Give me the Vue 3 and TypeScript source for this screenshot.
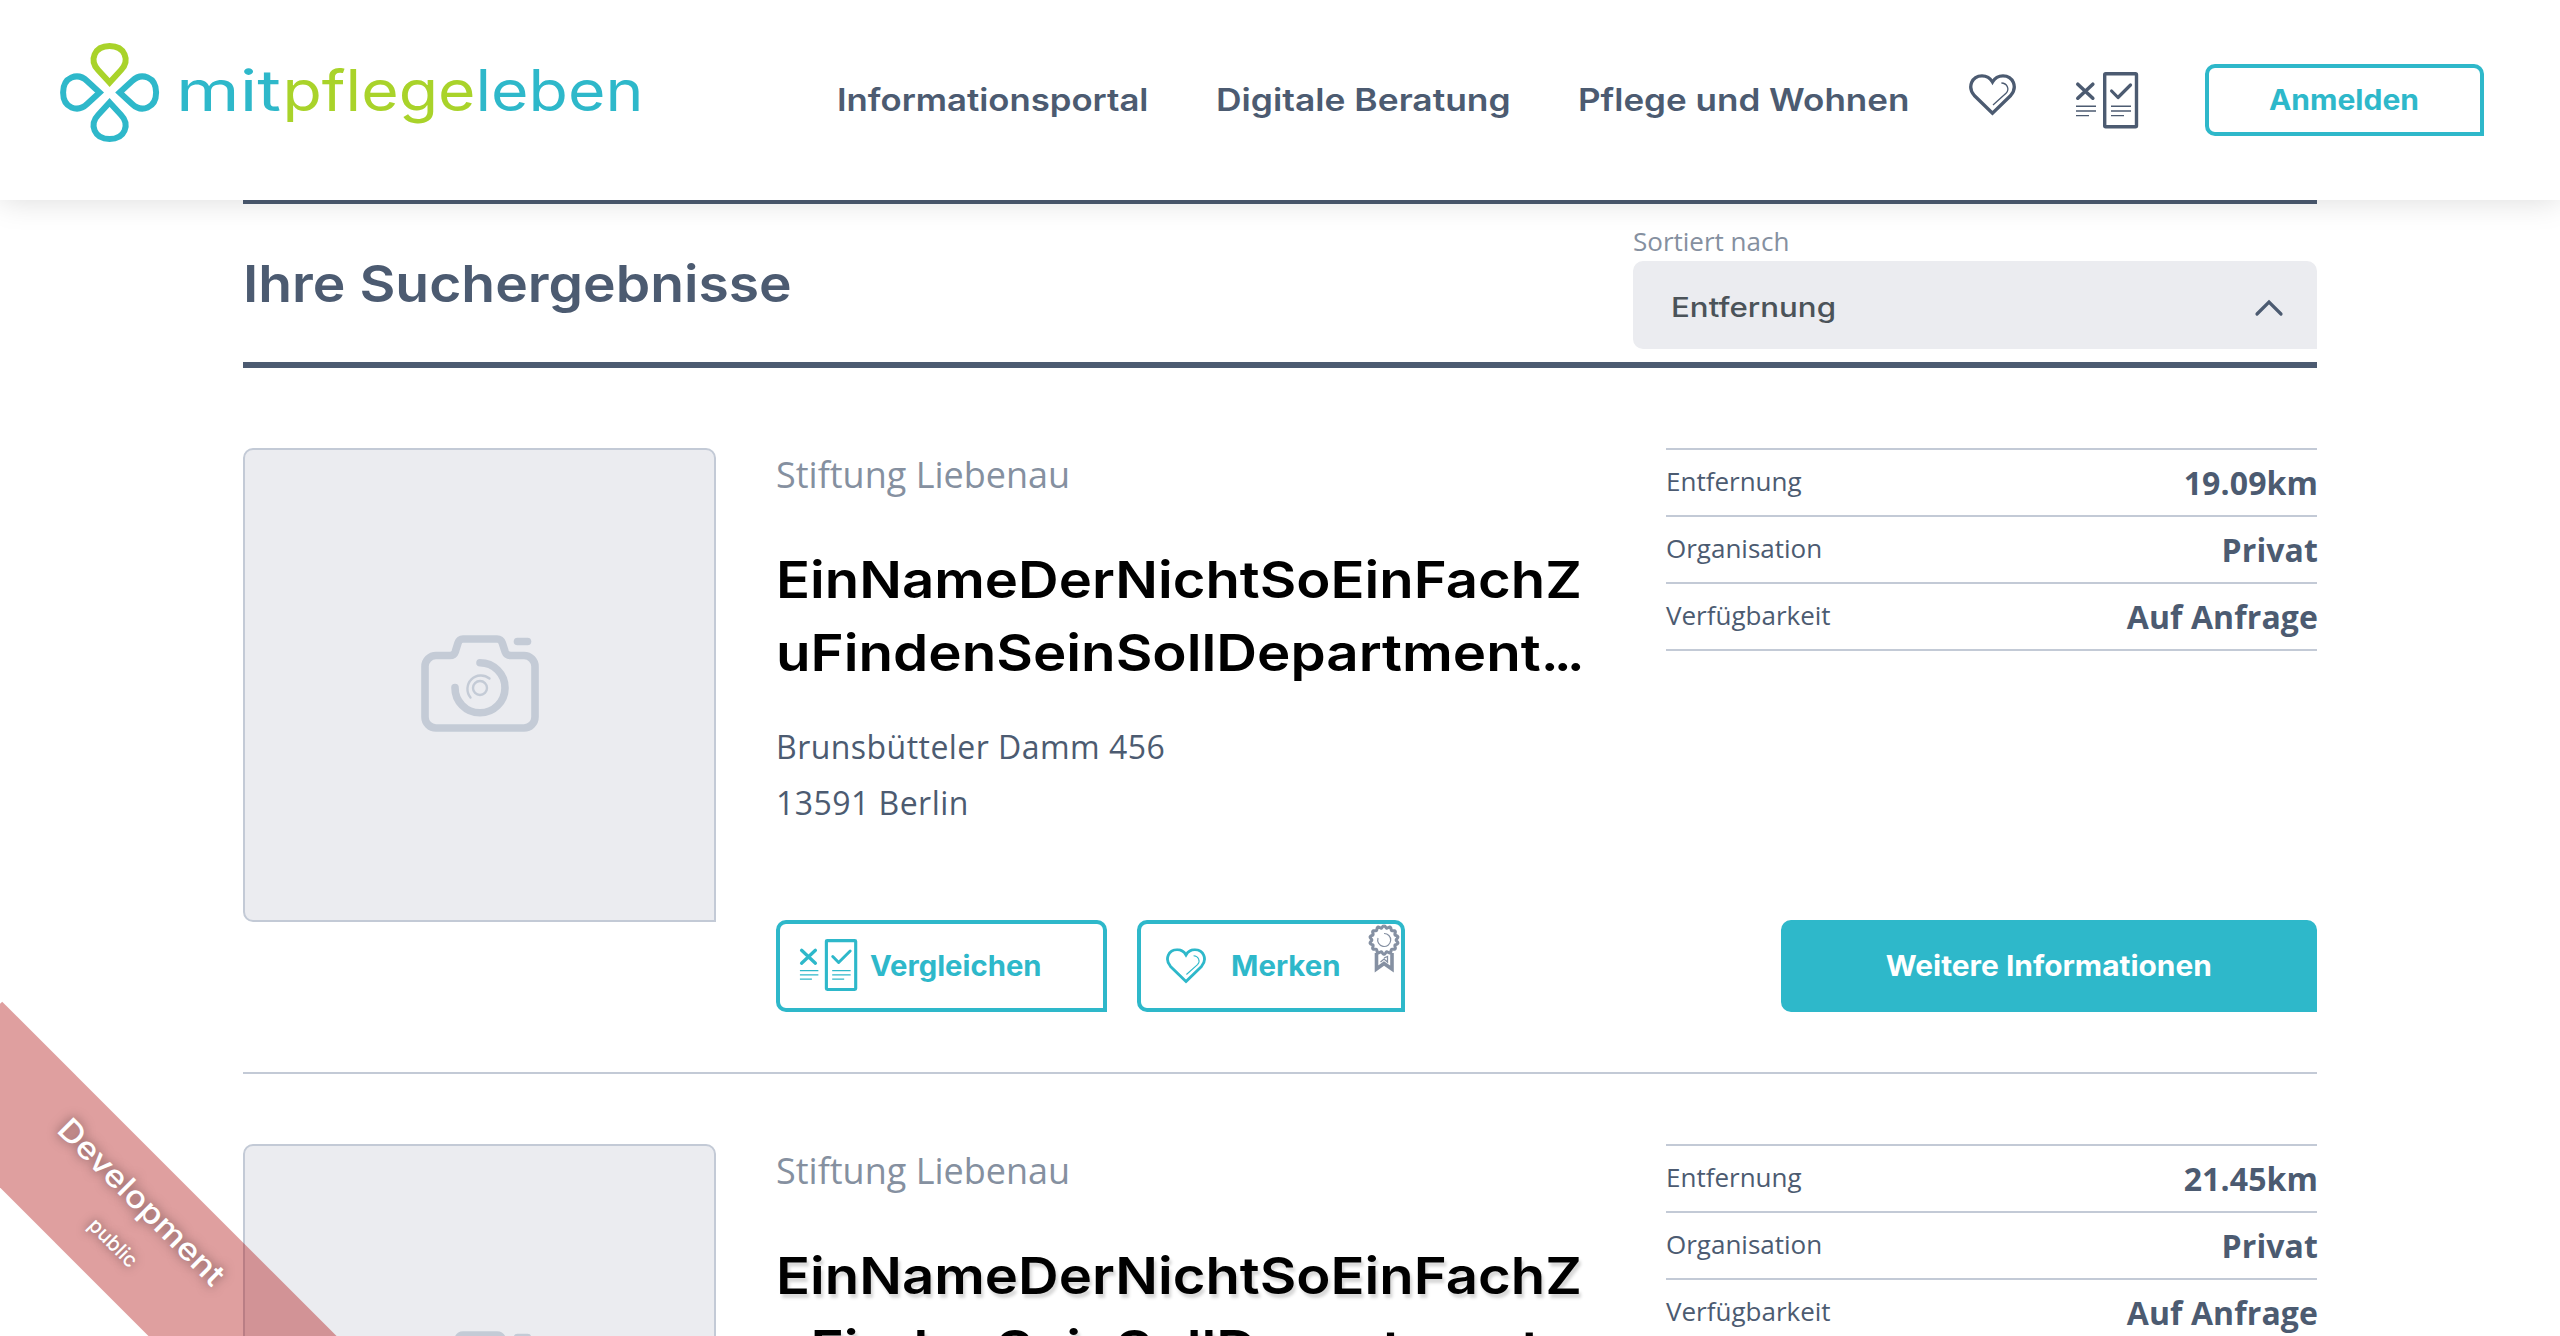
<script setup lang="ts">
interface Stat {
  label: string
  value: string
}
interface TitleLine {
  text: string
  dots: string
}
interface Result {
  id: number
  provider: string
  title: TitleLine[]
  street: string
  city: string
  hovered: boolean
  stats: Stat[]
}

const titleLines: TitleLine[] = [
  { text: 'EinNameDerNichtSoEinFachZ', dots: '' },
  { text: 'uFindenSeinSollDepartment', dots: '...' },
]

function makeResult(id: number, distance: string, hovered: boolean): Result {
  return {
    id,
    provider: 'Stiftung Liebenau',
    title: titleLines,
    street: 'Brunsbütteler Damm 456',
    city: '13591 Berlin',
    hovered,
    stats: [
      { label: 'Entfernung', value: distance },
      { label: 'Organisation', value: 'Privat' },
      { label: 'Verfügbarkeit', value: 'Auf Anfrage' },
    ],
  }
}

const results: Result[] = [makeResult(1, '19.09km', false), makeResult(2, '21.45km', true)]

const petals = [
  { angle: 0, color: '#a9d32a' },
  { angle: 90, color: '#2eb8ca' },
  { angle: 180, color: '#2eb8ca' },
  { angle: 270, color: '#2eb8ca' },
]

// Scalloped rim of the award badge
const rim = Array.from({ length: 113 }, (_, i) => {
  const a = (i / 112) * Math.PI * 2
  const r = 13.2 + 1.1 * Math.cos(a * 14)
  return `${(16 + r * Math.sin(a)).toFixed(2)},${(16 - r * Math.cos(a)).toFixed(2)}`
}).join(' ')
</script>

<template>
  <div class="page">
    <header class="header">
      <svg class="logo" width="600" height="120" viewBox="60 32 600 120">
        <g transform="translate(109.6 92.5)" fill="none" stroke-width="6">
          <path
            v-for="p in petals"
            :key="p.angle"
            d="M0 -10 L-11.5 -22.5 C-20.5 -32 -15.5 -46.5 0 -46.5 C15.5 -46.5 20.5 -32 11.5 -22.5 Z"
            :stroke="p.color"
            :transform="`rotate(${p.angle})`"
          />
        </g>
        <g class="logo-text">
          <text x="176" y="110.7" textLength="105" lengthAdjust="spacingAndGlyphs" fill="#2eb8ca">mit</text>
          <text x="282.5" y="110.7" textLength="193" lengthAdjust="spacingAndGlyphs" fill="#a9d32a">pflege</text>
          <text x="475.5" y="110.7" textLength="168" lengthAdjust="spacingAndGlyphs" fill="#2eb8ca">leben</text>
        </g>
      </svg>

      <nav class="nav">
        <a class="nav-link portal"><span>Informationsportal</span></a>
        <a class="nav-link advice"><span>Digitale Beratung</span></a>
        <a class="nav-link care"><span>Pflege und Wohnen</span></a>
      </nav>

      <svg class="nav-heart" width="47" height="42" viewBox="0 0 47 42"><use href="#heart" /></svg>
      <svg class="nav-compare" width="64" height="58" viewBox="0 0 64 58"><use href="#compare" /></svg>
      <button class="btn outline login"><span>Anmelden</span></button>
    </header>

    <main class="content">
      <section class="toolbar">
        <h1><span>Ihre Suchergebnisse</span></h1>
        <div class="sort">
          <label>Sortiert nach</label>
          <div class="select">
            <span>Entfernung</span>
            <svg width="30" height="18" viewBox="0 0 30 18">
              <path d="M3 15 L15 3 L27 15" fill="none" stroke="#4c5b71" stroke-width="3.2" stroke-linecap="round" />
            </svg>
          </div>
        </div>
      </section>

      <article v-for="r in results" :key="r.id" class="card">
        <div class="photo">
          <svg width="120" height="100" viewBox="40 33 120 100" fill="none" stroke="#c4cbd6" stroke-linecap="round">
            <path
              stroke-width="7.6"
              d="M56 55.5 H70 Q74 55.5 75.2 52 L78 43 Q79.3 39 83 39 H117 Q121 39 122.3 43 L125.2 52 Q126.5 55.5 131 55.5 H144 A11 11 0 0 1 155 66.5 V117 A11 11 0 0 1 144 128 H56 A11 11 0 0 1 45 117 V66.5 A11 11 0 0 1 56 55.5 Z"
            />
            <path stroke-width="7.6" d="M137.5 41.5 H147.5" />
            <path stroke-width="7.6" d="M100 62.8 A25 25 0 1 1 75 87.5" />
            <circle stroke-width="2.4" cx="100" cy="88" r="7" />
            <path stroke-width="2.4" d="M109.5 78.5 A13.5 13.5 0 0 0 90.5 97.5" />
          </svg>
        </div>

        <div class="info">
          <p class="provider">{{ r.provider }}</p>
          <h2 :class="{ hovered: r.hovered }">
            <span v-for="line in r.title" :key="line.text" class="line"
              >{{ line.text }}<span v-if="line.dots" class="dots">{{ line.dots }}</span></span
            >
          </h2>
          <p class="address">{{ r.street }}<br />{{ r.city }}</p>
          <div class="actions">
            <button class="btn outline compare">
              <svg width="59" height="53.5" viewBox="0 0 64 58"><use href="#compare" /></svg>
              <span>Vergleichen</span>
            </button>
            <button class="btn outline remember">
              <svg width="40" height="36" viewBox="0 0 47 42"><use href="#heart" /></svg>
              <span>Merken</span>
              <svg class="award" width="32" height="50" viewBox="0 0 32 50" fill="none" stroke="#8590a2">
                <polyline :points="rim" stroke-width="3" stroke-linejoin="round" />
                <path d="M16 9.5 A6.5 6.5 0 1 1 10 14" stroke-width="1.2" />
                <path d="M8.5 29 V45 L16 39.5 L24 45 V29" stroke-width="3.6" />
                <path d="M12.5 38 L16 35 L19.5 38 V32.5 L16 34" stroke-width="1.3" />
              </svg>
            </button>
          </div>
        </div>

        <div class="facts">
          <dl>
            <div v-for="s in r.stats" :key="s.label" class="fact">
              <dt>{{ s.label }}</dt>
              <dd>{{ s.value }}</dd>
            </div>
          </dl>
          <button class="btn solid"><span>Weitere Informationen</span></button>
        </div>
      </article>
    </main>

    <div class="ribbon">
      <span class="ribbon-main">Development</span>
      <span class="ribbon-sub">public</span>
    </div>

    <svg class="sprite" width="0" height="0">
      <symbol id="heart" viewBox="0 0 47 42">
        <g fill="none" stroke="currentColor">
          <path
            stroke-width="3.3"
            d="M23.5 39.3 L5.3 21.5 C-2 13 3 1.8 13 1.8 C18 1.8 21.5 4.5 23.5 8 C25.5 4.5 29 1.8 34 1.8 C44 1.8 49 13 41.7 21.5 Z"
          />
          <path stroke-width="1.3" d="M32.4 9 C38 9.2 41 15 37 19.3 L24 31" />
        </g>
      </symbol>
      <symbol id="compare" viewBox="0 0 64 58">
        <g fill="none" stroke="currentColor">
          <path stroke-width="3.6" stroke-linecap="round" d="M2.8 12.2 L17.8 26.2 M17.8 12.2 L2.8 26.2" />
          <path stroke-width="3.2" stroke-linecap="round" stroke-linejoin="round" d="M36.6 19 L43 25.5 L55.5 13" />
          <rect x="29.7" y="1.8" width="31.8" height="53" rx="1" stroke-width="3.4" />
          <path stroke-width="1.4" d="M1 34.3 H21 M1 39 H21 M1 43.6 H14 M36 34.3 H56 M36 39 H56 M36 43.6 H49" />
        </g>
      </symbol>
    </svg>
  </div>
</template>

<style>
body {
  margin: 0;
  background: #fff;
}
</style>

<style scoped>
.page {
  position: relative;
  width: 2560px;
  height: 1336px;
  overflow: hidden;
  background: #fff;
  color: #4c5b71;
  font-family: "Open Sans", sans-serif;
}

.sprite {
  position: absolute;
}

/* Header */
.header {
  position: relative;
  z-index: 2;
  display: flex;
  align-items: center;
  height: 200px;
  padding-left: 60px;
  box-sizing: border-box;
  background: #fff;
  box-shadow: 0 0 30px rgba(0, 0, 0, 0.15);
}

.logo {
  flex: none;
  margin-top: -16px;
}

.logo-text {
  font-family: Inter, sans-serif;
  font-size: 57px;
  font-weight: 400;
}

.nav {
  display: flex;
  gap: 68px;
  margin-left: 177px;
}

.nav-link {
  font: 600 31px/40px Inter, sans-serif;
  white-space: nowrap;
}

.nav-link span {
  display: block;
  transform-origin: left;
}

.portal {
  width: 311px;
}

.portal span {
  transform: scaleX(1.12);
}

.advice {
  width: 294px;
}

.advice span {
  transform: scaleX(1.142);
}

.care {
  width: 331px;
}

.care span {
  transform: scaleX(1.13);
}

.nav-heart {
  flex: none;
  margin: -11px 0 0 60px;
}

.nav-compare {
  flex: none;
  margin: 2px 0 0 59px;
}

/* Buttons */
.btn {
  display: flex;
  align-items: center;
  justify-content: center;
  flex: none;
  height: 92px;
  margin: 0;
  padding: 0;
  box-sizing: border-box;
  border: 4px solid #2eb8ca;
  border-radius: 10px 10px 0 10px;
  font: 700 28px/40px Inter, sans-serif;
  white-space: nowrap;
}

.btn svg {
  flex: none;
}

.outline {
  background: #fff;
  color: #2eb8ca;
}

.solid {
  width: 536px;
  background: #2eb8ca;
  color: #fff;
}

.solid span {
  transform: scaleX(1.067);
}

.login {
  width: 279px;
  height: 72px;
  margin-left: 66px;
}

.login span {
  margin-right: 2px;
  transform: scaleX(1.073);
}

.compare {
  width: 331px;
  justify-content: flex-start;
  padding-left: 19px;
}

.compare span {
  margin-left: 12px;
  transform: scaleX(1.045);
  transform-origin: left;
}

.remember {
  position: relative;
  width: 268px;
  justify-content: flex-start;
  padding-left: 25px;
}

.remember span {
  margin-left: 25px;
  transform: scaleX(1.05);
  transform-origin: left;
}

.award {
  position: absolute;
  top: 0;
  right: 1px;
}

/* Result list */
.content {
  width: 2074px;
  margin-left: 243px;
}

.toolbar {
  display: flex;
  justify-content: space-between;
  height: 168px;
  box-sizing: border-box;
  border-top: 4px solid #4c5b71;
  border-bottom: 6px solid #4c5b71;
}

h1 {
  align-self: center;
  margin: 1px 0 0;
  font: 600 51px/70px Inter, sans-serif;
}

h1 span {
  display: block;
  transform: scaleX(1.083);
  transform-origin: left;
}

.sort {
  width: 684px;
  padding-top: 19px;
}

.sort label {
  display: block;
  font-size: 26px;
  line-height: 36px;
  color: #8590a0;
}

.select {
  display: flex;
  align-items: center;
  justify-content: space-between;
  height: 88px;
  margin-top: 2px;
  padding: 6px 33px 0 38px;
  box-sizing: border-box;
  border-radius: 10px 10px 0 10px;
  background: #ebecf0;
  color: #4b5359;
  font: 500 27px/40px Inter, sans-serif;
}

.select span {
  transform: scaleX(1.157);
  transform-origin: left;
}

.card {
  display: grid;
  grid-template-columns: 473px 830px 651px;
  gap: 60px;
  height: 564px;
  padding: 70px 0 60px;
  border-bottom: 2px solid #c3cad6;
}

.toolbar + .card {
  padding-top: 80px;
}

.photo {
  display: flex;
  align-items: center;
  justify-content: center;
  height: 474px;
  padding-bottom: 5px;
  box-sizing: border-box;
  border: 2px solid #c3cad6;
  border-radius: 10px 10px 0 10px;
  background: #ebecf0;
}

.info,
.facts {
  display: flex;
  flex-direction: column;
  height: 564px;
}

.provider {
  margin: 1px 0 0;
  font-size: 36px;
  line-height: 52px;
  color: #8590a0;
}

h2 {
  margin: 42px 0 0;
  color: #000;
  font: 600 51px/73px Inter, sans-serif;
}

.line {
  display: block;
  transform: scaleX(1.103);
  transform-origin: left;
}

.line + .line {
  transform: scaleX(1.107);
}

.dots {
  letter-spacing: -4.5px;
}

h2.hovered {
  text-shadow: 2px 4px 3px rgba(0, 0, 0, 0.16);
}

.address {
  margin: 30px 0 0;
  font-size: 32px;
  line-height: 56px;
  letter-spacing: 0.46px;
}

.actions {
  display: flex;
  gap: 30px;
  margin-top: auto;
}

.facts {
  justify-content: space-between;
  align-items: flex-end;
}

dl {
  width: 100%;
  margin: 0;
  border-top: 2px solid #c3cad6;
}

.fact {
  display: flex;
  align-items: center;
  justify-content: space-between;
  height: 67px;
  box-sizing: border-box;
  border-bottom: 2px solid #c3cad6;
}

dt {
  padding-bottom: 3px;
  font-size: 26px;
  line-height: 40px;
}

dd {
  margin: 0 -1px 0 0;
  font-size: 32px;
  line-height: 44px;
  font-weight: 700;
  letter-spacing: 0.1px;
}

/* Environment ribbon */
.ribbon {
  position: absolute;
  z-index: 3;
  left: -116px;
  top: 1154px;
  width: 486px;
  height: 133px;
  display: flex;
  flex-direction: column;
  align-items: center;
  box-sizing: border-box;
  padding-top: 23px;
  transform: rotate(45deg);
  background: rgba(170, 0, 0, 0.375);
  color: #fff;
  font-family: Inter, sans-serif;
  font-weight: 500;
  text-shadow: 0 0 10px rgba(0, 0, 0, 0.5);
}

.ribbon-main {
  margin-right: 6px;
  font-size: 31px;
  line-height: 40px;
  transform: scaleX(1.13);
}

.ribbon-sub {
  margin: 9px 0 0 12px;
  font-size: 20.5px;
  line-height: 40px;
}
</style>
